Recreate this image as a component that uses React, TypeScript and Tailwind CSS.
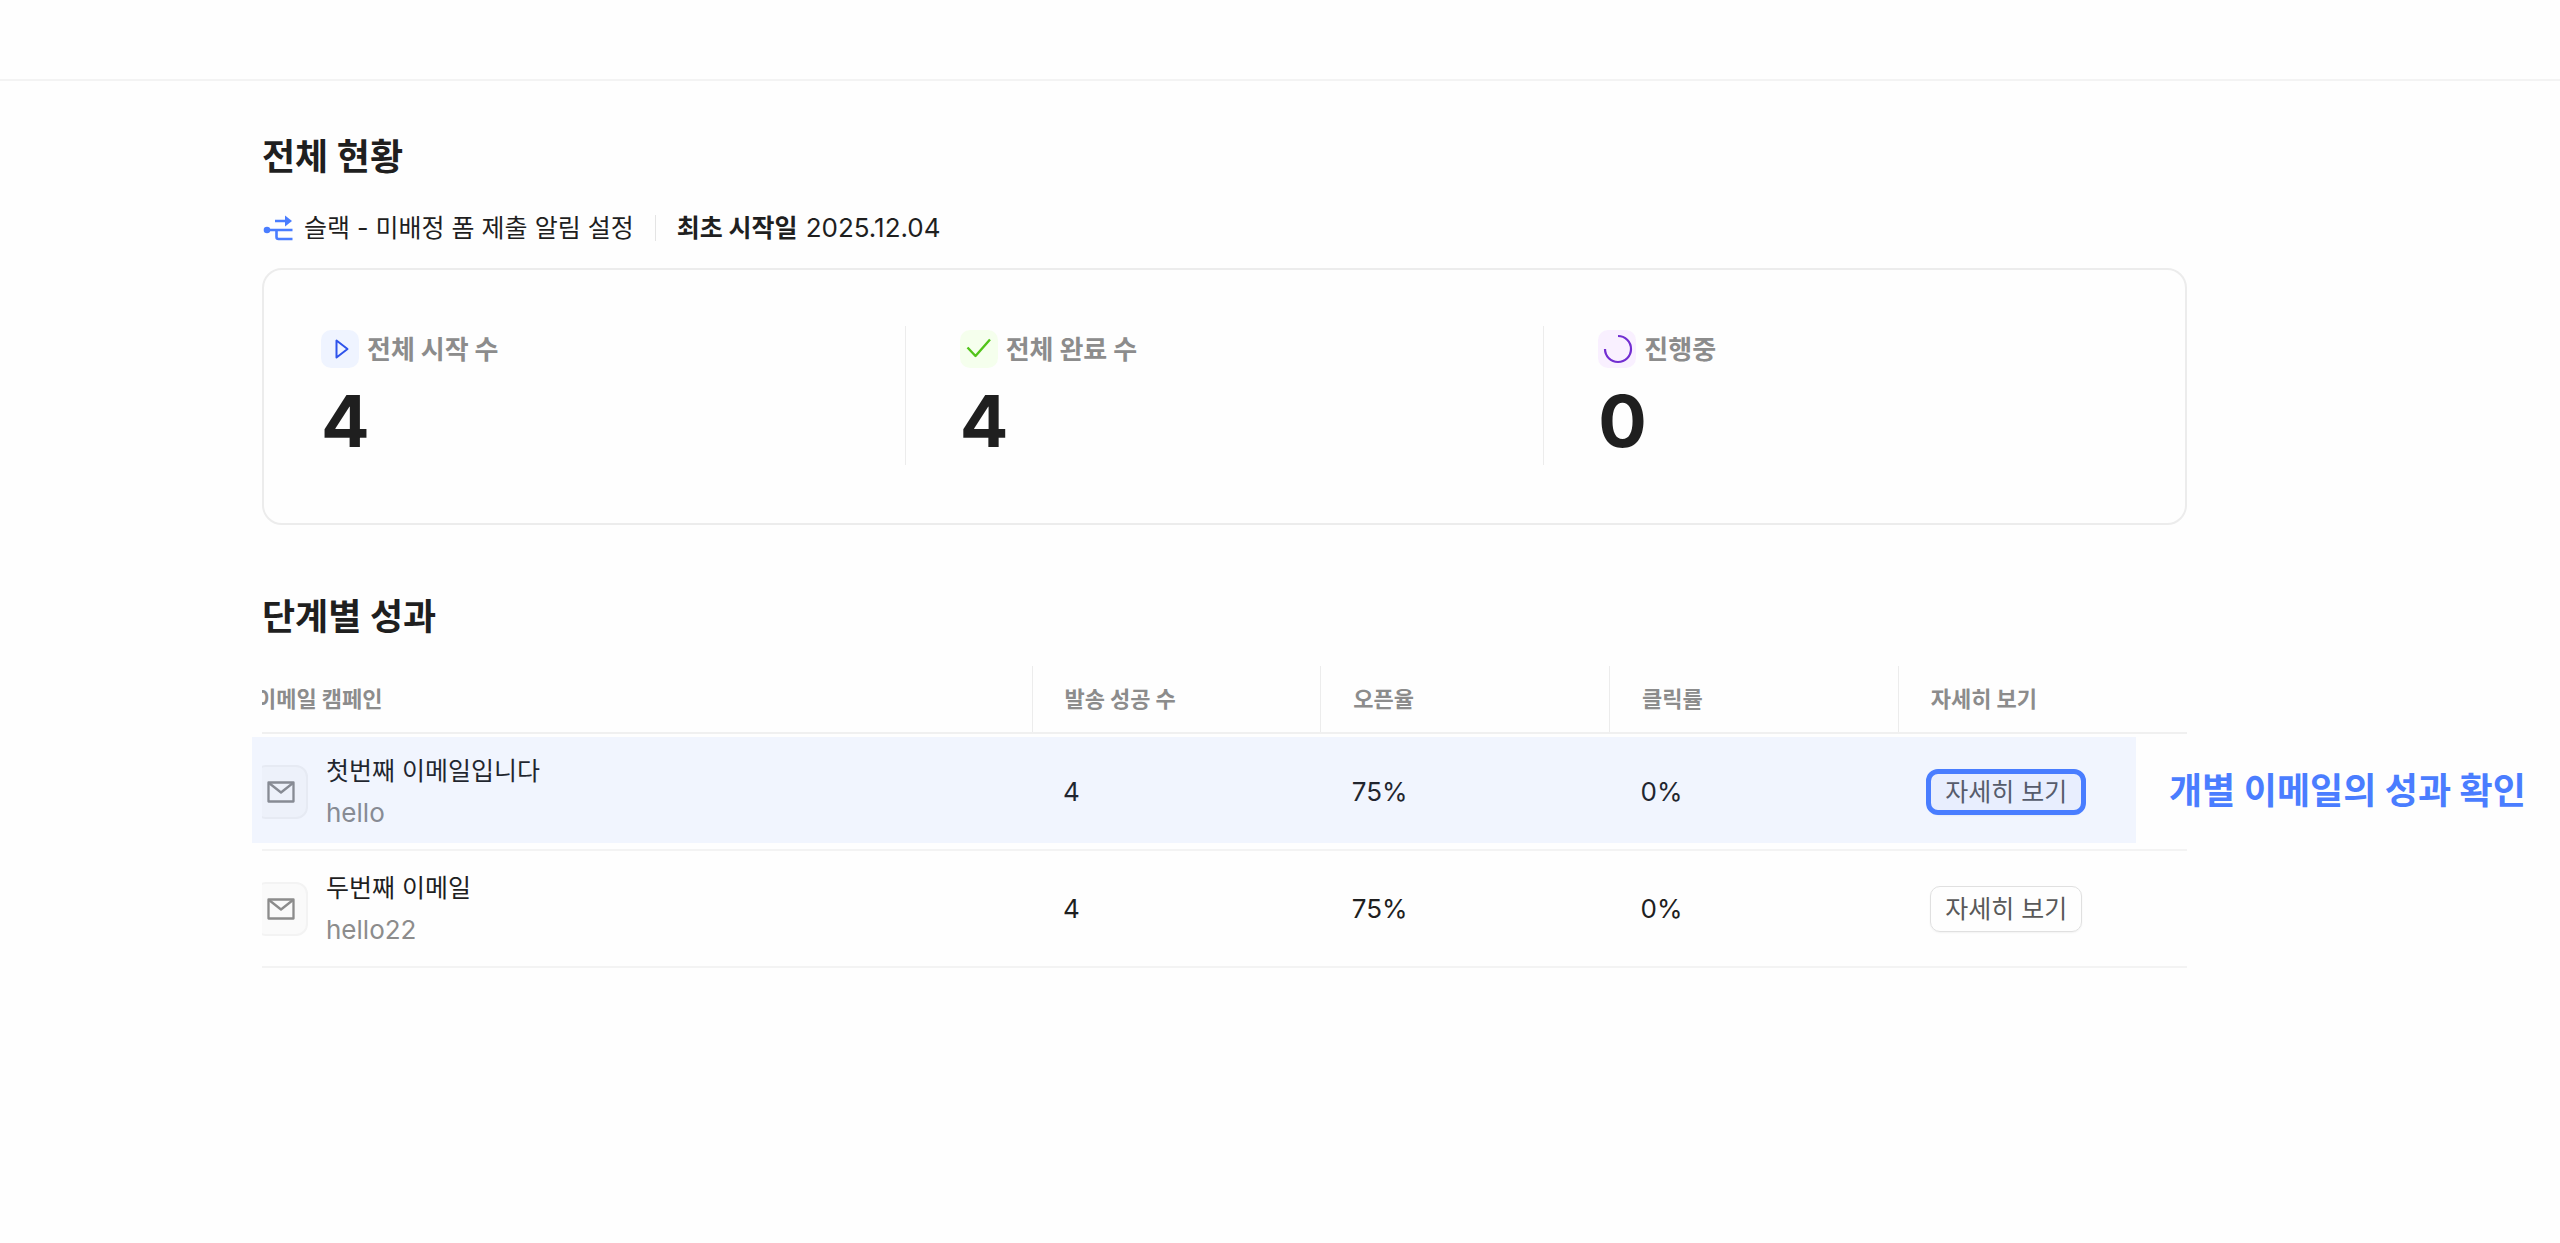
import type { ReactNode } from "react"

type Stat = {
    label: string
    value: number
    tile: string
    icon: ReactNode
}

type Campaign = {
    name: string
    subject: string
    sent: number
    openRate: string
    clickRate: string
    highlighted?: boolean
}

const stats: Stat[] = [
    { label: "전체 시작 수", value: 4, tile: "bg-[#eff4ff]", icon: <PlayIcon /> },
    { label: "전체 완료 수", value: 4, tile: "bg-[#f5ffed]", icon: <CheckIcon /> },
    { label: "진행중", value: 0, tile: "bg-[#f9f0ff]", icon: <LoadingIcon /> },
]

const campaigns: Campaign[] = [
    { name: "첫번째 이메일입니다", subject: "hello", sent: 4, openRate: "75%", clickRate: "0%", highlighted: true },
    { name: "두번째 이메일", subject: "hello22", sent: 4, openRate: "75%", clickRate: "0%" },
]

function FlowIcon() {
    return (
        <svg viewBox="0 0 32 28" className="h-7 w-8" fill="none" stroke="#4a7dff" strokeWidth="2.6">
            <path d="M13 7h12M5 16h25.500M14.500 16v7q0 2 2 2h14" />
            <path d="M23 1.500 30 7l-7 5.500Z" fill="#4a7dff" stroke="none" />
            <circle cx="5" cy="16" r="3.300" fill="#4a7dff" stroke="none" />
        </svg>
    )
}

function PlayIcon() {
    return (
        <svg viewBox="0 0 38 38" className="size-[38px]" fill="none" stroke="#2f54eb" strokeWidth="2" strokeLinejoin="round">
            <path d="M15.500 10.500v17l11-8.500Z" />
        </svg>
    )
}

function CheckIcon() {
    return (
        <svg viewBox="0 0 38 38" className="size-[38px]" fill="none" stroke="#52c41a" strokeWidth="2.400" strokeLinejoin="round">
            <path d="m7.500 17.500 8 8.500L30 9.500" />
        </svg>
    )
}

function LoadingIcon() {
    return (
        <svg viewBox="0 0 38 38" className="size-[38px]" fill="none" stroke="#722ed1" strokeWidth="2.200">
            <path d="M20 6a13 13 0 1 1-13 13" />
        </svg>
    )
}

function MailIcon() {
    return (
        <svg viewBox="0 0 28 22" className="h-[22px] w-7" fill="none" stroke="#8c8c8c" strokeWidth="2.300" strokeLinejoin="round">
            <rect x="1.500" y="1.500" width="25" height="19" />
            <path d="m2 2 12 9.500L26 2" />
        </svg>
    )
}

function StatItem({ stat }: { stat: Stat }) {
    return (
        <div className="pt-1">
            <div className="flex gap-2">
                <div className={`size-[38px] rounded-[10px] ${stat.tile}`}>{stat.icon}</div>
                <span className="font-['Noto_Sans_CJK_KR',sans-serif] text-[26px] leading-9 font-semibold text-[#8c8c8c]">
                    {stat.label}
                </span>
            </div>
            <p className="mt-2 text-[72px] leading-[90px] font-bold text-[#1f1f1f]">{stat.value}</p>
        </div>
    )
}

function Divider() {
    return <div className="h-[139px] w-px bg-[#ececec]" />
}

function CampaignRow({ campaign }: { campaign: Campaign }) {
    return (
        <tr className="h-[117px] border-b-2 border-[#f3f3f3] text-[26px] text-[#1f1f1f]">
            <td>
                <div className="-ml-2 flex items-center gap-[18px]">
                    <div className="flex size-[54px] items-center justify-center rounded-xl border-2 border-[#f3f3f3] bg-[#fafafa]">
                        <MailIcon />
                    </div>
                    <div className="leading-[42px]">
                        <p className="text-[25px]">{campaign.name}</p>
                        <p className="text-[#8c8c8c]">{campaign.subject}</p>
                    </div>
                </div>
            </td>
            <td className="px-[31px]">{campaign.sent}</td>
            <td className="px-[31px]">{campaign.openRate}</td>
            <td className="px-[31px]">{campaign.clickRate}</td>
            <td className="px-8">
                <span className="relative inline-flex align-middle">
                    <button
                        type="button"
                        className="h-[46px] rounded-[10px] border border-[#e0e0e0] px-[14px] text-[25px] leading-[42px] whitespace-nowrap text-[#595959] shadow-xs"
                    >
                        자세히 보기
                    </button>
                    {campaign.highlighted && (
                        <span className="pointer-events-none absolute -inset-x-1 inset-y-0 rounded-xl border-[5px] border-[#4a7dff] bg-[#4a7dff]/5" />
                    )}
                </span>
            </td>
        </tr>
    )
}

export default function App() {
    return (
        <div className="min-h-screen bg-[#fefefe] font-[Inter,'Noto_Sans_CJK_KR',sans-serif] text-[#1f1f1f]">
            <header className="h-[81px] border-b-2 border-[#f3f3f3]" />

            <main className="pt-[50px] pr-[373px] pb-20 pl-[262px]">
                <section>
                    <h1 className="text-[36px] leading-[52px] font-bold">전체 현황</h1>

                    <div className="mt-6 flex items-center text-[25px] leading-[42px] whitespace-nowrap">
                        <FlowIcon />
                        <span className="ml-[10px]">슬랙 - 미배정 폼 제출 알림 설정</span>
                        <span className="mx-[21px] h-[26px] w-px bg-[#e4e4e4]" />
                        <span className="font-bold">최초 시작일</span>
                        <span className="ml-2 text-[26px]">2025.12.04</span>
                    </div>

                    <div className="mt-[19px] grid h-[257px] grid-cols-[1fr_1px_1fr_1px_1fr] gap-x-[54px] rounded-[20px] border-2 border-[#ececec] px-[57px] pt-14">
                        <StatItem stat={stats[0]} />
                        <Divider />
                        <StatItem stat={stats[1]} />
                        <Divider />
                        <StatItem stat={stats[2]} />
                    </div>
                </section>

                <section className="mt-[66px]">
                    <h2 className="text-[36px] leading-[52px] font-bold">단계별 성과</h2>

                    <div className="relative mt-[23px]">
                        <div className="overflow-hidden">
                            <table className="w-full table-fixed border-collapse text-left">
                                <thead>
                                    <tr className="h-[67px] border-b-2 border-[#f0f0f0] font-['Noto_Sans_CJK_KR',sans-serif] text-[22px] text-[#8c8c8c]">
                                        <th className="w-2/5 pb-[3px] font-semibold">
                                            <span className="-ml-[6px] block">이메일 캠페인</span>
                                        </th>
                                        <th className="w-[15%] border-l border-[#ececec] px-8 pb-[3px] font-semibold">발송 성공 수</th>
                                        <th className="w-[15%] border-l border-[#ececec] px-8 pb-[3px] font-semibold">오픈율</th>
                                        <th className="w-[15%] border-l border-[#ececec] px-8 pb-[3px] font-semibold">클릭률</th>
                                        <th className="w-[15%] border-l border-[#ececec] px-8 pb-[3px] font-semibold">자세히 보기</th>
                                    </tr>
                                </thead>
                                <tbody>
                                    {campaigns.map((campaign) => (
                                        <CampaignRow key={campaign.name} campaign={campaign} />
                                    ))}
                                </tbody>
                            </table>
                        </div>

                        {/* callout over the first row */}
                        <div className="pointer-events-none absolute top-[71px] right-[51px] -left-[10px] h-[106px] bg-[#4a7dff]/7" />
                        <p className="absolute top-[71px] left-full -ml-[18px] text-[36px] leading-[108px] font-bold whitespace-nowrap text-[#4a7dff]">
                            개별 이메일의 성과 확인
                        </p>
                    </div>
                </section>
            </main>
        </div>
    )
}
